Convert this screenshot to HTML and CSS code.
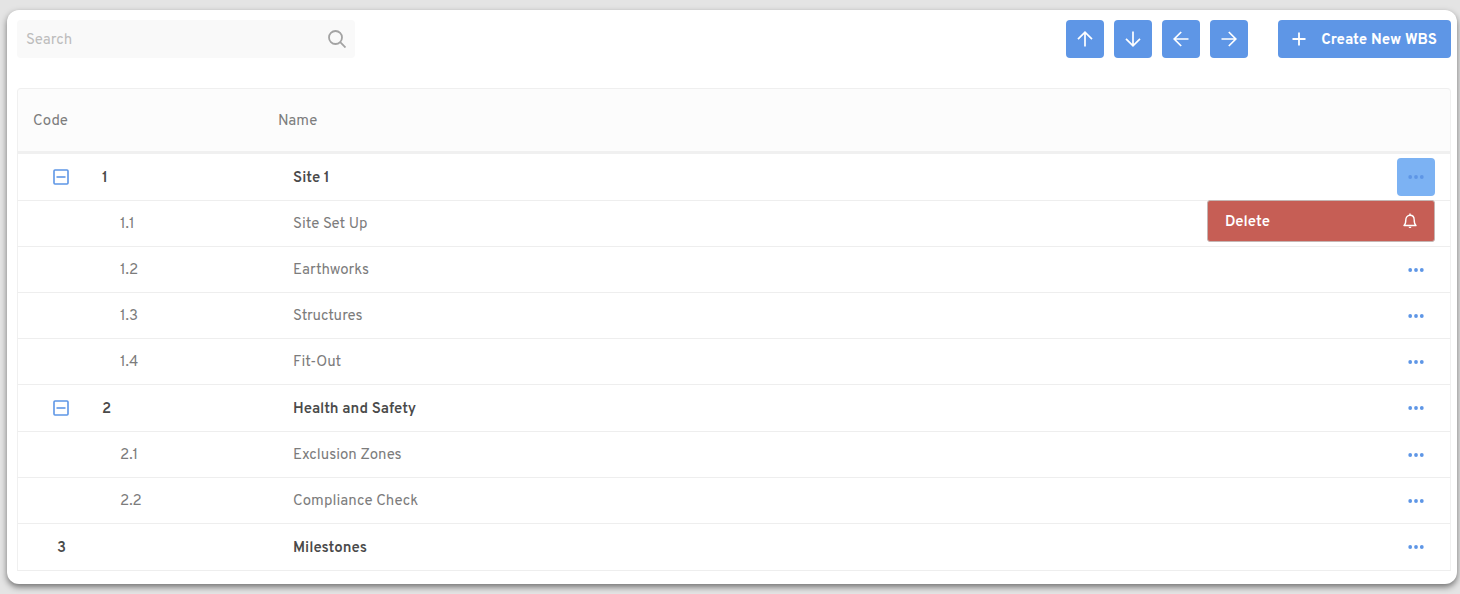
FILE: index.html
```
<!DOCTYPE html>
<html lang="en">
<head>
    <meta charset="UTF-8">
    <meta name="viewport" content="width=device-width, initial-scale=1.0">
    <title>WBS</title>
    <link rel="stylesheet" href="styles.css">
</head>
<body>
    <!-- shared icons -->
    <svg class="icon-defs" aria-hidden="true">
        <symbol id="arrow" viewBox="0 0 16 16">
            <path d="M8 15.5V1.500M1 8.200l7-7 7 7" fill="none" stroke="currentColor" stroke-width="1.7"/>
        </symbol>
        <symbol id="minus" viewBox="0 0 16 16">
            <rect x="1" y="1" width="14" height="14" rx="1" fill="none" stroke="currentColor" stroke-width="1.6"/>
            <path d="M3.500 8h9" stroke="currentColor" stroke-width="1.6"/>
        </symbol>
        <symbol id="dots" viewBox="0 0 16 4">
            <circle cx="2.2" cy="2" r="1.9" fill="currentColor"/>
            <circle cx="8" cy="2" r="1.9" fill="currentColor"/>
            <circle cx="13.8" cy="2" r="1.9" fill="currentColor"/>
        </symbol>
    </svg>

    <main class="card">
        <div class="toolbar">
            <form class="search-box" role="search">
                <input type="search" class="search-input" placeholder="Search" aria-label="Search">
                <button type="submit" class="search-button" aria-label="Search">
                    <svg width="18" height="18" viewBox="0 0 18 18" fill="none" stroke="currentColor" stroke-width="1.8">
                        <circle cx="7.5" cy="7.5" r="6.5"/>
                        <path d="M12.200 12.200l5.300 5.300"/>
                    </svg>
                </button>
            </form>

            <div class="move-buttons">
                <button type="button" class="btn" aria-label="Move up"><svg class="arrow"><use href="#arrow"/></svg></button>
                <button type="button" class="btn" aria-label="Move down"><svg class="arrow down"><use href="#arrow"/></svg></button>
                <button type="button" class="btn" aria-label="Move left"><svg class="arrow left"><use href="#arrow"/></svg></button>
                <button type="button" class="btn" aria-label="Move right"><svg class="arrow right"><use href="#arrow"/></svg></button>
            </div>

            <button type="button" class="btn create-button">
                <svg width="14" height="14" viewBox="0 0 14 14" stroke="currentColor" stroke-width="1.8">
                    <path d="M7 .5v13M.5 7h13"/>
                </svg>
                <span class="label">Create New WBS</span>
            </button>
        </div>

        <table class="wbs-table">
            <thead>
                <tr>
                    <th class="code-col" scope="col">Code</th>
                    <th scope="col">Name</th>
                    <th class="action-col"></th>
                </tr>
            </thead>
            <tbody>
                <tr class="parent">
                    <td><div class="code"><button type="button" class="toggle" aria-label="Collapse"><svg><use href="#minus"/></svg></button>1</div></td>
                    <td>Site 1</td>
                    <td class="actions">
                        <button type="button" class="more active" aria-label="Actions"><svg><use href="#dots"/></svg></button>
                        <div class="menu">
                            <button type="button" class="menu-item">
                                <span class="label">Delete</span>
                                <svg width="14" height="16" viewBox="0 0 14 16" fill="none" stroke="currentColor" stroke-width="1.4" stroke-linejoin="round">
                                    <path d="M1 12.500c1.500-1.200 1.800-2.500 1.800-5.500C2.800 4.200 4.500 2.300 7 2.300s4.200 1.900 4.200 4.700c0 3 .3 4.300 1.800 5.500z"/>
                                    <path d="M7 .5v1.800"/>
                                    <path d="M5.500 13.800c.3 1.700 2.700 1.700 3 0z" fill="currentColor" stroke="none"/>
                                </svg>
                            </button>
                        </div>
                    </td>
                </tr>
                <tr>
                    <td><div class="code child">1.1</div></td>
                    <td>Site Set Up</td>
                    <td class="actions"><button type="button" class="more" aria-label="Actions"><svg><use href="#dots"/></svg></button></td>
                </tr>
                <tr>
                    <td><div class="code child">1.2</div></td>
                    <td>Earthworks</td>
                    <td class="actions"><button type="button" class="more" aria-label="Actions"><svg><use href="#dots"/></svg></button></td>
                </tr>
                <tr>
                    <td><div class="code child">1.3</div></td>
                    <td>Structures</td>
                    <td class="actions"><button type="button" class="more" aria-label="Actions"><svg><use href="#dots"/></svg></button></td>
                </tr>
                <tr>
                    <td><div class="code child">1.4</div></td>
                    <td>Fit-Out</td>
                    <td class="actions"><button type="button" class="more" aria-label="Actions"><svg><use href="#dots"/></svg></button></td>
                </tr>
                <tr class="parent">
                    <td><div class="code"><button type="button" class="toggle" aria-label="Collapse"><svg><use href="#minus"/></svg></button>2</div></td>
                    <td>Health and Safety</td>
                    <td class="actions"><button type="button" class="more" aria-label="Actions"><svg><use href="#dots"/></svg></button></td>
                </tr>
                <tr>
                    <td><div class="code child">2.1</div></td>
                    <td>Exclusion Zones</td>
                    <td class="actions"><button type="button" class="more" aria-label="Actions"><svg><use href="#dots"/></svg></button></td>
                </tr>
                <tr>
                    <td><div class="code child">2.2</div></td>
                    <td>Compliance Check</td>
                    <td class="actions"><button type="button" class="more" aria-label="Actions"><svg><use href="#dots"/></svg></button></td>
                </tr>
                <tr class="parent">
                    <td><div class="code leaf">3</div></td>
                    <td>Milestones</td>
                    <td class="actions"><button type="button" class="more" aria-label="Actions"><svg><use href="#dots"/></svg></button></td>
                </tr>
            </tbody>
        </table>
    </main>
</body>
</html>
```
FILE: styles.css
```
* {
    box-sizing: border-box;
}

body {
    margin: 0;
    padding: 10px 3px 10px 7px;
    background-color: #e4e4e4;
    color: #7c7c7c;
    font-family: Overpass, Roboto, sans-serif;
    font-size: 15px;
    line-height: 20px;
}

button, input {
    font: inherit;
    color: inherit;
    border: 0;
    padding: 0;
    margin: 0;
    background: none;
}

button {
    cursor: pointer;
}

svg {
    display: block;
}

.icon-defs {
    position: absolute;
    width: 0;
    height: 0;
}

.card {
    padding: 10px 6px 13px 10px;
    background-color: #fff;
    border-radius: 12px;
    box-shadow: 0 3px 6px rgba(0, 0, 0, 0.5);
}

/* toolbar */
.toolbar {
    display: flex;
    align-items: center;
    margin-bottom: 30px;
}

.search-box {
    display: flex;
    align-items: center;
    width: 338px;
    height: 38px;
    padding: 0 9px;
    margin-right: auto;
    background-color: #f9f9f9;
    border-radius: 4px;
}

.search-input {
    flex: 1;
    min-width: 0;
    padding-top: 3px;
    outline: none;
}

.search-input::placeholder {
    color: #bdbdbd;
}

.search-button {
    color: #a3a3a3;
}

.move-buttons {
    display: flex;
    gap: 10px;
    margin-right: 30px;
}

.btn {
    display: flex;
    align-items: center;
    justify-content: center;
    width: 38px;
    height: 38px;
    background-color: #5e96e6;
    color: #fff;
    border-radius: 4px;
}

.arrow {
    width: 16px;
    height: 16px;
}

.arrow.down {
    transform: rotate(180deg);
}

.arrow.left {
    transform: rotate(-90deg);
}

.arrow.right {
    transform: rotate(90deg);
}

.create-button {
    width: auto;
    gap: 15px;
    padding: 0 14px;
    font-weight: bold;
}

/* the font sits high in its line */
.label {
    padding-top: 4px;
}

/* table */
.wbs-table {
    width: 100%;
    table-layout: fixed;
    border-collapse: separate;
    border-spacing: 0;
}

.wbs-table th {
    height: 66px;
    padding: 4px 15px 0;
    background-color: #fcfcfc;
    border-top: 1px solid #efefef;
    border-bottom: 3px solid #f0f0f0;
    font-weight: normal;
    text-align: left;
}

.wbs-table td {
    height: 46px;
    padding: 3px 30px 0;
    border-bottom: 1px solid #eee;
}

.wbs-table th:first-child,
.wbs-table td:first-child {
    border-left: 1px solid #f0f0f0;
}

.wbs-table th:last-child,
.wbs-table td:last-child {
    border-right: 1px solid #f0f0f0;
}

.wbs-table th:first-child {
    border-top-left-radius: 4px;
}

.wbs-table th:last-child {
    border-top-right-radius: 4px;
}

.wbs-table .parent td {
    height: 47px;
    color: #4a4a4a;
    font-weight: 600;
}

.code-col {
    width: 246px;
}

.action-col {
    width: 100px;
}

.code {
    display: flex;
    align-items: center;
    padding-left: 5px;
}

.code.child {
    padding-left: 72px;
}

.code.leaf {
    padding-left: 9px;
}

.toggle {
    margin: 0 33px 4px 0;
    color: #5e96e6;
}

.toggle svg {
    width: 16px;
    height: 16px;
}

.wbs-table .actions {
    position: relative;
    padding: 0 15px 0 0;
}

.more {
    display: flex;
    align-items: center;
    justify-content: center;
    width: 38px;
    height: 38px;
    margin-left: auto;
    border-radius: 4px;
    color: #5e96e6;
}

.more svg {
    width: 16px;
    height: 4px;
}

.more.active {
    background-color: #7cb2f3;
}

/* dropdown under the active row button */
.menu {
    position: absolute;
    top: 100%;
    right: 15px;
    z-index: 1;
    width: 228px;
    border: 1px solid #c5b5b3;
    border-radius: 3px;
    background-color: #c65e55;
}

.menu-item {
    display: flex;
    align-items: center;
    justify-content: space-between;
    width: 100%;
    height: 40px;
    padding: 0 17px;
    color: #fff;
}
```
